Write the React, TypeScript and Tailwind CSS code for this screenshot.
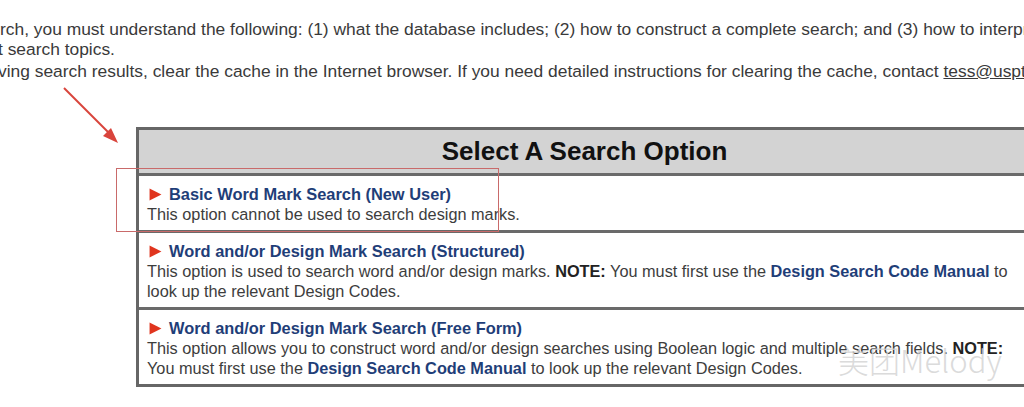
import React from "react";

const Tri = () => (
    <svg width="13" height="13" viewBox="0 0 12 12" className="shrink-0">
        <polygon points="0.5,0.5 11.5,6 0.5,11.5" fill="#e0351e" />
    </svg>
);

interface RowProps {
    title: string;
    children: React.ReactNode;
    last?: boolean;
}

const OptionRow = ({ title, children, last }: RowProps) => (
    <div className={`pl-[8px] pr-[9px] pt-[9px] pb-[6px] ${last ? "" : "border-b-[3px] border-[#6a6a6a]"}`}>
        <div className="flex items-center gap-[7px] pl-[2px]">
            <Tri />
            <span className="text-[16.4px] font-bold text-[#1f3e78] leading-[19px]">{title}</span>
        </div>
        <p className="text-[16.3px] leading-[20px] text-[#3d3d3d]">{children}</p>
    </div>
);

const Link = ({ children }: { children: React.ReactNode }) => (
    <span className="font-bold text-[#1f3e78]">{children}</span>
);

export default function App() {
    return (
        <div className="relative w-[1024px] h-[407px] overflow-hidden bg-white font-['Liberation_Sans',Arial,sans-serif]">
            <div className="pt-[19px] text-[17.4px] leading-[20px] text-[#3a3a3a] whitespace-nowrap">
                <p>rch, you must understand the following: (1) what the database includes; (2) how to construct a complete search; and (3) how to interpret</p>
                <p className="-ml-[2px]">t search topics.</p>
                <p className="mt-[2px] -ml-[2px]">
                    ving search results, clear the cache in the Internet browser. If you need detailed instructions for clearing the cache, contact{" "}
                    <span className="underline">tess@uspto.gov</span>
                </p>
            </div>

            <div className="ml-[136px] mt-[46px] w-[894px] border-[3px] border-[#666] border-r-0">
                <div className="h-[46px] bg-[#d3d3d3] border-b-[3px] border-[#6a6a6a] flex items-center justify-center">
                    <h1 className="text-[26px] font-bold text-[#111]">Select A Search Option</h1>
                </div>
                <OptionRow title="Basic Word Mark Search (New User)">
                    This option cannot be used to search design marks.
                </OptionRow>
                <OptionRow title="Word and/or Design Mark Search (Structured)">
                    This option is used to search word and/or design marks. <b className="text-[#222]">NOTE:</b> You must first use the{" "}
                    <Link>Design Search Code Manual</Link> to look up the relevant Design Codes.
                </OptionRow>
                <OptionRow title="Word and/or Design Mark Search (Free Form)" last>
                    This option allows you to construct word and/or design searches using Boolean logic and multiple search fields.{" "}
                    <b className="text-[#222]">NOTE:</b> You must first use the <Link>Design Search Code Manual</Link> to look up the
                    relevant Design Codes.
                </OptionRow>
            </div>

            {/* annotation arrow */}
            <svg className="absolute left-0 top-0" width="200" height="160">
                <line x1="64" y1="88" x2="112" y2="136" stroke="#d9443c" strokeWidth="2" />
                <polygon points="118,143 103,136 111,128" fill="#d9443c" />
            </svg>

            {/* highlight box */}
            <div className="absolute left-[116px] top-[168px] w-[383px] h-[64px] border border-[#c96a6a]" />

            {/* watermark */}
            <div className="absolute left-[838px] top-[344px] text-[31px] text-[#d2d2d2]/80 font-['Noto_Sans_CJK_SC',sans-serif] font-light leading-none">
                美团Melody
            </div>
        </div>
    );
}
